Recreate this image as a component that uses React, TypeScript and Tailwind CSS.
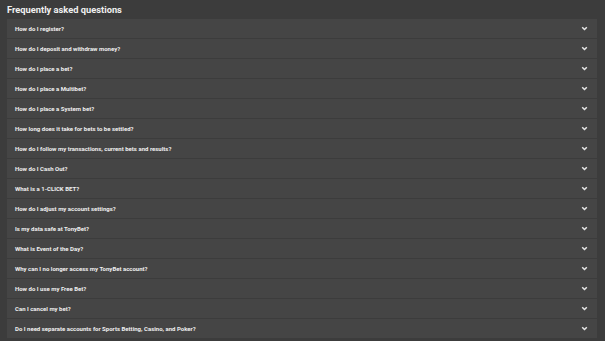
import React from "react";

const questions = [
  "How do I register?",
  "How do I deposit and withdraw money?",
  "How do I place a bet?",
  "How do I place a Multibet?",
  "How do I place a System bet?",
  "How long does it take for bets to be settled?",
  "How do I follow my transactions, current bets and results?",
  "How do I Cash Out?",
  "What is a 1-CLICK BET?",
  "How do I adjust my account settings?",
  "Is my data safe at TonyBet?",
  "What is Event of the Day?",
  "Why can I no longer access my TonyBet account?",
  "How do I use my Free Bet?",
  "Can I cancel my bet?",
  "Do I need separate accounts for Sports Betting, Casino, and Poker?",
];

function Chevron() {
  return (
    <svg width="7" height="5" viewBox="0 0 7 5" className="shrink-0">
      <polyline points="1.2,1.2 3.5,3.5 5.8,1.2" fill="none" stroke="#e8e8e8" strokeWidth="1.5" />
    </svg>
  );
}

export default function App() {
  return (
    <div
      className="w-[605px] h-[341px] bg-[#3c3c3c] overflow-hidden pl-[7px] pr-[8px]"
      style={{ fontFamily: "Roboto, 'Liberation Sans', sans-serif" }}
    >
      <h1 className="h-[19px] pt-[4px] text-[9.3px] leading-[12px] font-bold text-[#f0f0f0]">
        Frequently asked questions
      </h1>
      <div className="flex flex-col gap-px">
        {questions.map((q) => (
          <div
            key={q}
            className="h-[19px] bg-[#454545] flex items-center justify-between pl-[8px] pr-[9px]"
          >
            <span className="text-[6px] font-bold text-[#efefef] leading-none">{q}</span>
            <Chevron />
          </div>
        ))}
      </div>
    </div>
  );
}
